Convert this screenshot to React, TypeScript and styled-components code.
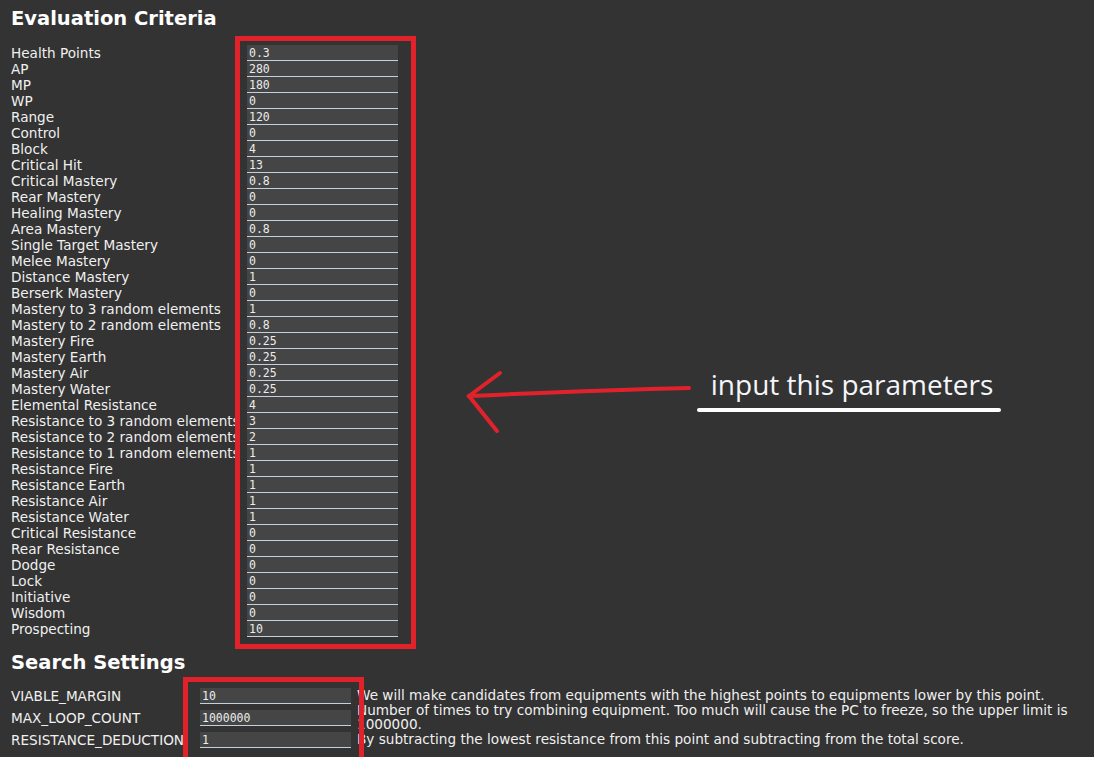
import React from "react";
import styled, { createGlobalStyle } from "styled-components";

const GlobalStyle = createGlobalStyle`
  html, body {
    margin: 0;
    padding: 0;
    background: #333333;
  }
  body {
    font-family: "DejaVu Sans", Verdana, sans-serif;
    color: #eeeeee;
    width: 1094px;
    height: 757px;
    overflow: hidden;
  }
`;

const Page = styled.div`
  position: relative;
  padding: 7px 8px 0 11px;
  height: 750px;
  box-sizing: border-box;
`;

const Heading = styled.h2<{ $top?: number }>`
  margin: ${(p) => p.$top ?? 0}px 0 0 0;
  font-family: "DejaVu Sans", Verdana, sans-serif;
  font-weight: bold;
  font-size: 19.5px;
  line-height: 24px;
  color: #ffffff;
`;

const CriteriaList = styled.div`
  margin-top: 14px;
  display: flex;
  flex-direction: column;
`;

const CriteriaRow = styled.div`
  display: grid;
  grid-template-columns: 236px 151px;
  grid-template-rows: 16px;
  align-items: center;
`;

const Label = styled.span`
  font-size: 13.6px;
  line-height: 16px;
  white-space: nowrap;
  color: #f0f0f0;
`;

const Field = styled.input`
  box-sizing: border-box;
  width: 151px;
  height: 16px;
  margin: 0;
  padding: 0 0 0 2px;
  border: none;
  border-bottom: 1px solid #c3d0de;
  background: #454545;
  color: #ececec;
  font-family: "DejaVu Sans Mono", "Liberation Mono", monospace;
  font-size: 11.5px;
  line-height: 15px;
  outline: none;
  position: relative;
  z-index: 1;
`;

const SettingsList = styled.div`
  margin-top: 10px;
  display: flex;
  flex-direction: column;
`;

const SettingsRow = styled.div`
  display: grid;
  grid-template-columns: 183px 151px 1fr;
  grid-template-rows: 22px;
  column-gap: 6px;
  align-items: center;
`;

const Description = styled.span`
  font-size: 13.6px;
  line-height: 14px;
  color: #f0f0f0;
  max-width: 729px;
  margin-top: -2px;
`;

const Highlight = styled.div<{ $l: number; $t: number; $w: number; $h: number }>`
  position: absolute;
  left: ${(p) => p.$l}px;
  top: ${(p) => p.$t}px;
  width: ${(p) => p.$w}px;
  height: ${(p) => p.$h}px;
  box-sizing: border-box;
  border: 5px solid #e2222b;
  z-index: 2;
  pointer-events: none;
`;

const Note = styled.div`
  position: absolute;
  left: 697px;
  top: 367px;
  width: 304px;
  display: flex;
  flex-direction: column;
  align-items: center;
`;

const NoteText = styled.span`
  font-family: "Open Sans", "Noto Sans", sans-serif;
  font-size: 28px;
  line-height: 34px;
  color: #f3f6fa;
  padding-left: 6px;
  white-space: nowrap;
`;

const NoteLine = styled.div`
  margin-top: 7px;
  width: 304px;
  height: 4px;
  border-radius: 2px;
  background: #ffffff;
`;

const ArrowSvg = styled.svg`
  position: absolute;
  left: 0;
  top: 0;
  pointer-events: none;
`;

const criteria: [string, string][] = [
  ["Health Points", "0.3"],
  ["AP", "280"],
  ["MP", "180"],
  ["WP", "0"],
  ["Range", "120"],
  ["Control", "0"],
  ["Block", "4"],
  ["Critical Hit", "13"],
  ["Critical Mastery", "0.8"],
  ["Rear Mastery", "0"],
  ["Healing Mastery", "0"],
  ["Area Mastery", "0.8"],
  ["Single Target Mastery", "0"],
  ["Melee Mastery", "0"],
  ["Distance Mastery", "1"],
  ["Berserk Mastery", "0"],
  ["Mastery to 3 random elements", "1"],
  ["Mastery to 2 random elements", "0.8"],
  ["Mastery Fire", "0.25"],
  ["Mastery Earth", "0.25"],
  ["Mastery Air", "0.25"],
  ["Mastery Water", "0.25"],
  ["Elemental Resistance", "4"],
  ["Resistance to 3 random elements", "3"],
  ["Resistance to 2 random elements", "2"],
  ["Resistance to 1 random elements", "1"],
  ["Resistance Fire", "1"],
  ["Resistance Earth", "1"],
  ["Resistance Air", "1"],
  ["Resistance Water", "1"],
  ["Critical Resistance", "0"],
  ["Rear Resistance", "0"],
  ["Dodge", "0"],
  ["Lock", "0"],
  ["Initiative", "0"],
  ["Wisdom", "0"],
  ["Prospecting", "10"],
];

const settings: [string, string, string][] = [
  [
    "VIABLE_MARGIN",
    "10",
    "We will make candidates from equipments with the highest points to equipments lower by this point.",
  ],
  [
    "MAX_LOOP_COUNT",
    "1000000",
    "Number of times to try combining equipment. Too much will cause the PC to freeze, so the upper limit is 1000000.",
  ],
  [
    "RESISTANCE_DEDUCTION",
    "1",
    "By subtracting the lowest resistance from this point and subtracting from the total score.",
  ],
];

export default function App() {
  return (
    <>
      <GlobalStyle />
      <Page>
        <Heading>Evaluation Criteria</Heading>
        <CriteriaList>
          {criteria.map(([label, value]) => (
            <CriteriaRow key={label}>
              <Label>{label}</Label>
              <Field type="text" defaultValue={value} />
            </CriteriaRow>
          ))}
        </CriteriaList>
        <Heading $top={14}>Search Settings</Heading>
        <SettingsList>
          {settings.map(([label, value, desc]) => (
            <SettingsRow key={label}>
              <Label>{label}</Label>
              <Field type="text" defaultValue={value} />
              <Description>{desc}</Description>
            </SettingsRow>
          ))}
        </SettingsList>

        <Highlight $l={235} $t={36} $w={181} $h={613} />
        <Highlight $l={183} $t={677} $w={181} $h={100} />

        <ArrowSvg width="1094" height="757" viewBox="0 0 1094 757">
          <g stroke="#e2222b" strokeWidth="4" strokeLinecap="round" fill="none">
            <path d="M689 388 Q 600 390 469 396" />
            <path d="M500 373 L469 396 L497 431" />
          </g>
        </ArrowSvg>
        <Note>
          <NoteText>input this parameters</NoteText>
          <NoteLine />
        </Note>
      </Page>
    </>
  );
}
